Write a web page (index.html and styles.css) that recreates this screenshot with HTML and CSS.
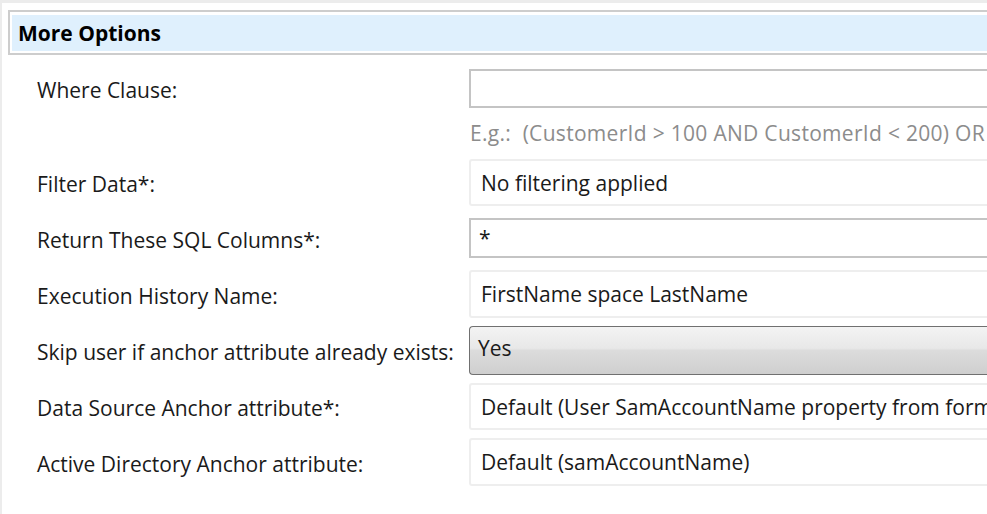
FILE: index.html
```html
<!DOCTYPE html>
<html lang="en">
<head>
    <meta charset="UTF-8">
    <title>More Options</title>
    <link rel="stylesheet" href="styles.css">
</head>
<body>
    <div class="panel">
        <div class="section-header">
            <div class="section-title">More Options</div>
        </div>

        <div class="form">
            <div class="label row-where">Where Clause:</div>
            <div class="field editable row-where"></div>

            <div class="hint-spacer"></div>
            <div class="hint">E.g.:&nbsp; (CustomerId &gt; 100 AND CustomerId &lt; 200) OR</div>

            <div class="label row-filter">Filter Data*:</div>
            <div class="field readonly row-filter">No filtering applied</div>

            <div class="label row-return">Return These SQL Columns*:</div>
            <div class="field editable row-return">*</div>

            <div class="label row-exec">Execution History Name:</div>
            <div class="field readonly row-exec">FirstName space LastName</div>

            <div class="label row-skip">Skip user if anchor attribute already exists:</div>
            <div class="field combo row-skip">Yes</div>

            <div class="label row-ds">Data Source Anchor attribute*:</div>
            <div class="field readonly row-ds">Default (User SamAccountName property from form)</div>

            <div class="label row-ad">Active Directory Anchor attribute:</div>
            <div class="field readonly row-ad">Default (samAccountName)</div>
        </div>
    </div>
</body>
</html>
```

FILE: styles.css
```css
html, body { margin: 0; padding: 0; background: #fff; overflow: hidden; }
body { font-family: "Open Sans", "Noto Sans", "Liberation Sans", sans-serif; font-size: 21px; color: #1a1a1a; width: 987px; height: 514px; }

.panel { width: 1300px; height: 507px; border-top: 3px solid #ececec; border-left: 2px solid #ececec; border-bottom: 3px solid #e4e4e4; padding: 7px 0 0 6px; }

.section-header { border: 2px solid #cdcdcd; border-right: none; padding: 3px 0 2px 2px; }
.section-title { background: #dff0fd; height: 36px; line-height: 36px; padding-left: 6px; font-weight: 700; font-size: 21px; color: #000; }

.form { display: grid; grid-template-columns: 432px 900px; padding-left: 29px; margin-top: 14px; align-items: center; }
.label { white-space: nowrap; padding-top: 3px; }

.field { box-sizing: border-box; padding-left: 10px; display: flex; align-items: center; white-space: nowrap; overflow: hidden; }
.field.editable { border: 2px solid #c4c4c4; border-right: none; padding-left: 8px; }
.field.readonly { border: 2px solid #eeeeee; border-right: none; border-radius: 3px 0 0 3px; }
.field.combo { border: 1px solid #707070; border-right: none; border-radius: 4px 0 0 4px; background: linear-gradient(#f3f3f3, #e8e8e8 45%, #dcdcdc 50%, #cfcfcf); padding-left: 8px; align-items: flex-start; padding-top: 7px; }

.row-where.field { height: 39px; }
.hint { height: 38px; color: #8c8c8c; display: flex; align-items: center; padding-left: 1px; margin-top: 6px; white-space: nowrap; letter-spacing: 0.3px; }
.row-filter.field { height: 47px; margin-top: 7px; }
.row-return.field { height: 40px; margin-top: 12px; }
.row-exec.field { height: 48px; margin-top: 12px; }
.row-skip.field { height: 49px; margin-top: 8px; }
.row-ds.field { height: 47px; margin-top: 8px; }
.row-ad.field { height: 48px; margin-top: 8px; }

.row-filter.label { margin-top: 7px; }
.row-return.label { margin-top: 12px; }
.row-exec.label { margin-top: 12px; }
.row-skip.label { margin-top: 8px; }
.row-ds.label { margin-top: 8px; }
.row-ad.label { margin-top: 8px; }
```
